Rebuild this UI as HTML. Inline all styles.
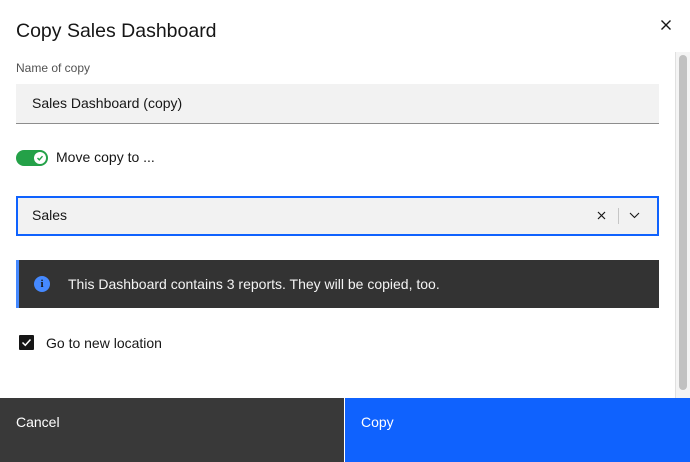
<!DOCTYPE html>
<html><head><style>
*{box-sizing:border-box;margin:0;padding:0}
body{width:690px;height:462px;background:#fff;font-family:"Liberation Sans",sans-serif;color:#161616;position:relative;overflow:hidden}
.a{position:absolute}
</style></head><body>
<div class="a" style="left:16px;top:20px;font-size:19.5px;">Copy Sales Dashboard</div>
<svg class="a" style="left:661px;top:20px" width="10" height="10" viewBox="0 0 10 10"><path d="M0.5 0.5L9.5 9.5M9.5 0.5L0.5 9.5" stroke="#161616" stroke-width="1.4"/></svg>
<div class="a" style="left:675px;top:52px;width:15px;height:346px;background:#f4f4f4;border-left:1px solid #e0e0e0"></div>
<div class="a" style="left:679px;top:55px;width:8px;height:335px;background:#c1c1c1;border-radius:4px"></div>
<div class="a" style="left:16px;top:61px;font-size:12px;color:#525252">Name of copy</div>
<div class="a" style="left:16px;top:84px;width:643px;height:40px;background:#f2f2f2;border-bottom:1px solid #8d8d8d;font-size:14px;padding:11px 16px">Sales Dashboard (copy)</div>
<div class="a" style="left:16px;top:150px;width:32px;height:16px;background:#24a148;border-radius:8px"></div>
<div class="a" style="left:34px;top:152px;width:12px;height:12px;background:#fff;border-radius:6px"></div>
<svg class="a" style="left:36px;top:154px" width="8" height="8" viewBox="0 0 8 8"><path d="M1.5 4L3.3 5.8L6.5 2.2" stroke="#24a148" stroke-width="1.4" fill="none"/></svg>
<div class="a" style="left:56px;top:149px;font-size:14px">Move copy to ...</div>
<div class="a" style="left:16px;top:196px;width:643px;height:40px;background:#f2f2f2;border:2px solid #0f62fe;font-size:14px;padding:9px 14px">Sales</div>
<svg class="a" style="left:597px;top:211px" width="9" height="9" viewBox="0 0 9 9"><path d="M1 1L8 8M8 1L1 8" stroke="#161616" stroke-width="1.2"/></svg>
<div class="a" style="left:618px;top:208px;width:1px;height:16px;background:#c6c6c6"></div>
<svg class="a" style="left:629px;top:212px" width="11" height="7" viewBox="0 0 11 7"><path d="M1 1L5.5 5.5L10 1" stroke="#161616" stroke-width="1.1" fill="none"/></svg>
<div class="a" style="left:16px;top:260px;width:643px;height:48px;background:#333;border-left:3px solid #4589ff"></div>
<div class="a" style="left:34px;top:276px;width:16px;height:16px;border-radius:8px;background:#4589ff;color:#161616;font-size:11px;font-weight:bold;text-align:center;line-height:16px;font-family:'Liberation Serif',serif">i</div>
<div class="a" style="left:68px;top:276px;font-size:14px;color:#f4f4f4">This Dashboard contains 3 reports. They will be copied, too.</div>
<div class="a" style="left:19px;top:335px;width:15px;height:15px;background:#161616;border-radius:1px"></div>
<svg class="a" style="left:19px;top:335px" width="15" height="15" viewBox="0 0 15 15"><path d="M3.5 7.5L6.3 10.3L11.5 4.5" stroke="#fff" stroke-width="1.5" fill="none"/></svg>
<div class="a" style="left:46px;top:335px;font-size:14px">Go to new location</div>
<div class="a" style="left:0;top:398px;width:344px;height:64px;background:#393939;color:#fff;font-size:14px;padding:16px">Cancel</div>
<div class="a" style="left:345px;top:398px;width:345px;height:64px;background:#0f62fe;color:#fff;font-size:14px;padding:16px">Copy</div>
</body></html>
